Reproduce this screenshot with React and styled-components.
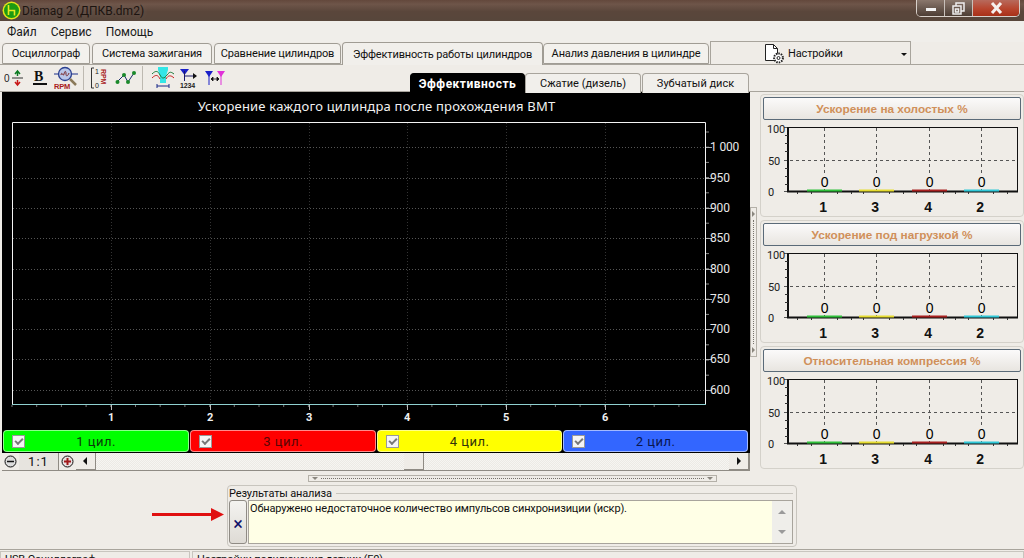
import React from 'react'
import styled, { createGlobalStyle } from 'styled-components'

const GlobalStyle = createGlobalStyle`
  html, body {
    margin: 0;
    padding: 0;
    background: #efece7;
    overflow: hidden;
  }
  * { box-sizing: border-box; }
`

const topTabs = [
  { label: 'Осциллограф', width: 88, gap: 2 },
  { label: 'Система зажигания', width: 120, gap: 2 },
  { label: 'Сравнение цилиндров', width: 127, gap: 1 },
  { label: 'Эффективность работы цилиндров', width: 201, active: true },
  { label: 'Анализ давления в цилиндре', width: 166 }
]

const yLabels = [
  { y: 147, text: '1 000' },
  { y: 178, text: '950' },
  { y: 208, text: '900' },
  { y: 238, text: '850' },
  { y: 269, text: '800' },
  { y: 299, text: '750' },
  { y: 329, text: '700' },
  { y: 359, text: '650' },
  { y: 390, text: '600' }
]

const xLabels = ['1', '2', '3', '4', '5', '6']
const xPos = [111, 210, 309, 407, 506, 605]

const cylinders = [
  { label: '1 цил.', color: '#00ff00', text: '#0a3a0a', width: 186 },
  { label: '3 цил.', color: '#ff0000', text: '#5a0505', width: 186 },
  { label: '4 цил.', color: '#ffff00', text: '#33330a', width: 185 },
  { label: '2 цил.', color: '#3366ff', text: '#0a1650', width: 185 }
]

const miniCharts = ['Ускорение на холостых %', 'Ускорение под нагрузкой %', 'Относительная компрессия %']

export default function App () {
  return (
    <Window>
      <GlobalStyle />
      <TitleBar>
        <svg width="21" height="21" viewBox="0 0 21 21">
          <circle cx="10.5" cy="10.5" r="9" fill="#e2e21a" />
          <circle cx="10.5" cy="10.5" r="7.5" fill="#1d9a12" />
          <path d="M7.5 5v10M7.5 10.5h6v5" fill="none" stroke="#e8e820" strokeWidth="1.6" />
        </svg>
        <TitleText>Diamag 2 (ДПКВ.dm2)</TitleText>
        <WindowButtons>
          <WinButton>
            <svg width="12" height="8" viewBox="0 0 12 8"><rect x="1" y="4" width="10" height="3" fill="#f4f4f4" /></svg>
          </WinButton>
          <WinButton>
            <svg width="13" height="13" viewBox="0 0 13 13" fill="none" stroke="#eee" strokeWidth="1.5"><rect x="4" y="1" width="8" height="8" /><rect x="1" y="4" width="8" height="8" fill="#6b5a50" /><rect x="3.5" y="7" width="3" height="3" /></svg>
          </WinButton>
          <CloseButton>
            <svg width="13" height="12" viewBox="0 0 13 12"><path d="M2 1l9 10M11 1l-9 10" stroke="#f6f0ee" strokeWidth="3" /></svg>
          </CloseButton>
        </WindowButtons>
      </TitleBar>

      <MenuBar>
        <MenuItem>Файл</MenuItem>
        <MenuItem>Сервис</MenuItem>
        <MenuItem>Помощь</MenuItem>
      </MenuBar>

      <TabStrip>
        {topTabs.map(t => (
          <TopTab key={t.label} $active={t.active} $width={t.width} $gap={t.gap}>{t.label}</TopTab>
        ))}
        <SettingsTab>
          <svg width="22" height="21" viewBox="0 0 22 21" fill="none">
            <path d="M1.5 1.5h8l4 4v12h-12z" fill="#fff" stroke="#222" />
            <path d="M9.5 1.5v4h4" stroke="#222" />
            <circle cx="14.5" cy="15" r="4.4" fill="#fff" stroke="#222" strokeWidth="2" strokeDasharray="1.5 1" />
            <circle cx="14.5" cy="15" r="1.5" stroke="#222" />
          </svg>
          <span>Настройки</span>
          <Caret />
        </SettingsTab>
      </TabStrip>

      <ToolRow>
        <ToolGroup>
          <ToolIcon>
            <svg width="22" height="18" viewBox="0 0 22 18">
              <text x="0" y="13" fontFamily="Liberation Sans" fontSize="10" fill="#222">0</text>
              <path d="M8 9h11" stroke="#333" />
              <path d="M13.5 7V3M11 5l2.5-3 2.5 3" fill="none" stroke="#0a7a20" strokeWidth="1.5" />
              <path d="M13.5 11v4M11 13l2.5 3 2.5-3" fill="none" stroke="#c81818" strokeWidth="1.5" />
            </svg>
          </ToolIcon>
          <ToolIcon>
            <svg width="22" height="18" viewBox="0 0 22 18">
              <text x="4" y="12" fontFamily="Liberation Serif" fontSize="14" fontWeight="700" fill="#111">B</text>
              <rect x="3" y="14" width="14" height="2" fill="#111" />
            </svg>
          </ToolIcon>
          <ToolIcon>
            <svg width="26" height="24" viewBox="0 0 26 24">
              <path d="M0 8h24" stroke="#1a2f8a" />
              <circle cx="11" cy="8" r="6.5" fill="#b9c6e8" stroke="#2a3f90" strokeWidth="1.3" />
              <path d="M7 9c1-5 2 3 3-1s2-3 2 0 2 2 3-1" fill="none" stroke="#7a2a2a" />
              <path d="M16 13l6 6" stroke="#8a7a5a" strokeWidth="2.5" />
              <text x="0" y="23" fontFamily="Liberation Sans" fontSize="7.5" fontWeight="700" fill="#a82020">RPM</text>
            </svg>
          </ToolIcon>
        </ToolGroup>
        <ToolSep />
        <ToolGroup>
          <ToolIcon>
            <svg width="20" height="24" viewBox="0 0 20 24">
              <path d="M4 2H1.5v20H4" fill="none" stroke="#333" />
              <text x="5" y="8" fontFamily="Liberation Sans" fontSize="7" fill="#222">1</text>
              <text x="5" y="22" fontFamily="Liberation Sans" fontSize="7" fill="#222">0</text>
              <text transform="translate(11 3) rotate(90)" fontFamily="Liberation Sans" fontSize="7" fontWeight="700" fill="#a82020">RPM</text>
            </svg>
          </ToolIcon>
          <ToolIcon>
            <svg width="22" height="18" viewBox="0 0 22 18">
              <path d="M2 13l7-7 4 7 6-9" fill="none" stroke="#1a2a6a" />
              <g fill="#1a8a2a"><circle cx="2.5" cy="13" r="2" /><circle cx="9" cy="6" r="2" /><circle cx="13" cy="13" r="2" /><circle cx="19" cy="4" r="2" /></g>
            </svg>
          </ToolIcon>
        </ToolGroup>
        <ToolSep />
        <IconGroupWide>
          <ToolIcon>
            <svg width="24" height="22" viewBox="0 0 24 22">
              <path d="M7 0h10v3l-2 6v7h-6V9L7 3z" fill="#33e6e6" />
              <path d="M1 7c4-4 6-3 8 1s4 4 7 0 4-3 7-1" fill="none" stroke="#1a7a3a" />
              <path d="M1 11c4-4 6-3 8 1M15 12c2-4 5-4 8-1" fill="none" stroke="#c82020" />
              <path d="M6 19h12M6 17v4M18 17v4" stroke="#1a2a8a" />
            </svg>
          </ToolIcon>
          <ToolIcon>
            <svg width="22" height="22" viewBox="0 0 22 22">
              <path d="M2 2h9L6.5 8z" fill="#1a20c8" />
              <path d="M6.5 4v10M7 9h11" stroke="#1a1a6a" />
              <path d="M15 6l4 3-4 3z" fill="#111" />
              <text x="2" y="21" fontFamily="Liberation Sans" fontSize="7" fontWeight="700" fill="#222">1234</text>
            </svg>
          </ToolIcon>
          <ToolIcon>
            <svg width="22" height="18" viewBox="0 0 22 18">
              <path d="M1 2h8L5 8z" fill="#1a20c8" />
              <path d="M5 4v12" stroke="#1a20c8" />
              <path d="M13 2h8l-4 6z" fill="#e030d8" />
              <path d="M17 4v12" stroke="#e030d8" />
              <path d="M7 10h8M7 10l2-2v4zM15 10l-2-2v4z" stroke="#111" fill="#111" strokeWidth=".8" />
            </svg>
          </ToolIcon>
        </IconGroupWide>
        <SubTabs>
          <SubTab $active $width={115}>Эффективность</SubTab>
          <SubTab $width={116}>Сжатие (дизель)</SubTab>
          <SubTab $width={107}>Зубчатый диск</SubTab>
        </SubTabs>
      </ToolRow>

      <Workspace>
        <LeftColumn>
          <ChartPanel>
            <ChartTitle>Ускорение каждого цилиндра после прохождения ВМТ</ChartTitle>
            <MainChart />
            <LegendRow>
              {cylinders.map(c => (
                <LegendButton key={c.label} $bg={c.color} $fg={c.text} $width={c.width}>
                  <CheckBox><CheckMark /></CheckBox>
                  <span>{c.label}</span>
                </LegendButton>
              ))}
            </LegendRow>
          </ChartPanel>
          <ScrollRow>
            <RoundButton>
              <svg width="13" height="13" viewBox="0 0 13 13"><circle cx="6.5" cy="6.5" r="5.5" fill="#dcdcdc" stroke="#111" /><path d="M3 6.5h7" stroke="#111" strokeWidth="1.5" /></svg>
            </RoundButton>
            <ZoomValue>1:1</ZoomValue>
            <RoundButton>
              <svg width="13" height="13" viewBox="0 0 13 13"><circle cx="6.5" cy="6.5" r="5.5" fill="#e8e0e0" stroke="#111" /><path d="M3 6.5h7M6.5 3v7" stroke="#a01818" strokeWidth="2" /></svg>
            </RoundButton>
            <ScrollTrack>
              <ScrollArrow><ArrowLeft /></ScrollArrow>
              <ScrollSpace $grow={311} />
              <ScrollThumb />
              <ScrollSpace $grow={307} />
              <ScrollArrow><ArrowRight /></ScrollArrow>
            </ScrollTrack>
          </ScrollRow>
        </LeftColumn>

        <VerticalSplit>
          <SplitArrow />
          <SplitDots />
          <SplitArrow />
        </VerticalSplit>

        <RightColumn>
          {miniCharts.map(title => (
            <MiniPanel key={title}>
              <MiniHeader>{title}</MiniHeader>
              <MiniChart />
            </MiniPanel>
          ))}
        </RightColumn>
      </Workspace>

      <HorizontalSplit>
        <SplitArrowDown />
        <HorizontalDots />
        <SplitArrowDown />
      </HorizontalSplit>

      <BottomRow>
        <svg width="72" height="13" viewBox="0 0 72 13">
          <path d="M0 5h60v3H0z" fill="#e01010" />
          <path d="M59 0l13 6.5L59 13z" fill="#e01010" />
        </svg>
        <ResultGroup>
          <ResultLegend>
            <span>Результаты анализа</span>
            <LegendLine />
          </ResultLegend>
          <ResultBody>
            <CloseResult>×</CloseResult>
            <ResultText>
              <ResultMessage>Обнаружено недостаточное количество импульсов синхронизиции (искр).</ResultMessage>
              <ResultScroll>
                <ResultScrollButton><ScrollUp /></ResultScrollButton>
                <ResultScrollButton><ScrollDown /></ResultScrollButton>
              </ResultScroll>
            </ResultText>
          </ResultBody>
        </ResultGroup>
      </BottomRow>

      <StatusBar>
        <StatusCell $width={190}>USB Осциллограф</StatusCell>
        <StatusCell $width={832}>Настройки подключения датчик (F0)</StatusCell>
      </StatusBar>
    </Window>
  )
}

function MainChart () {
  const ticks = []
  for (let x = 12; x <= 700; x += 24.7) ticks.push(x)
  const minor = []
  for (let y = 132; y < 404; y += 15.2) minor.push(y)
  return (
    <PlotSvg viewBox="0 0 748 314">
      <g transform="translate(-2 -116)">
        {yLabels.map(l => (
          <path key={l.y} d={`M13 ${l.y}.5H704`} stroke="#555" strokeDasharray="1 2" />
        ))}
        {xPos.map(x => (
          <path key={x} d={`M${x}.5 123V403`} stroke="#333" strokeDasharray="1 2" />
        ))}
        <path d="M12.5 404V122.5H705.5V404" fill="none" stroke="#f4f4f4" />
        <path d="M12 404.500H706" stroke="#8fd0d0" />
        {minor.map(y => <path key={y} d={`M706 ${y}h3`} stroke="#888" />)}
        {yLabels.map(l => <path key={l.y} d={`M706 ${l.y}.5h6`} stroke="#aaa" />)}
        {ticks.map(x => <path key={x} d={`M${x} 405v2`} stroke="#777" />)}
        {xPos.map(x => <path key={x} d={`M${x}.5 405v5`} stroke="#bbb" />)}
        {yLabels.map(l => (
          <text key={l.y} x={710} y={l.y + 4} fill="#e8e8e8" fontSize="12" fontFamily="Roboto, sans-serif">{l.text}</text>
        ))}
        {xLabels.map((t, i) => (
          <text key={t} x={xPos[i]} y={421} fill="#f0f0f0" fontSize="11" fontWeight="700" textAnchor="middle" fontFamily="Roboto, sans-serif">{t}</text>
        ))}
      </g>
    </PlotSvg>
  )
}

function MiniChart () {
  const cols = [
    { x: 61, name: '1', color: '#2fbf3a' },
    { x: 113, name: '3', color: '#e6dc30' },
    { x: 166, name: '4', color: '#a82020' },
    { x: 218, name: '2', color: '#30c8d8' }
  ]
  return (
    <svg width="258" height="90" viewBox="0 0 258 90">
      <path d="M21 3.5h4M21 36.5h234M21 67.5h4" stroke="#555" strokeDasharray="3 3" />
      {cols.map(c => (
        <path key={c.x} d={`M${c.x}.5 4V67`} stroke="#555" strokeDasharray="3 3" />
      ))}
      <rect x="25.5" y="3.5" width="229" height="64" fill="none" stroke="#111" />
      <path d="M24 67.5H255" stroke="#111" strokeWidth="2" />
      <path d="M25 3V68" stroke="#111" strokeWidth="2" />
      {[11, 19, 27, 44, 52, 60].map(y => <path key={y} d={`M22 ${y}.5h3`} stroke="#333" />)}
      {[34, 48, 74, 88, 100, 126, 140, 153, 180, 192, 205, 230, 244].map(x => <path key={x} d={`M${x}.5 68v2`} stroke="#333" />)}
      {cols.map(c => (
        <g key={c.name}>
          <rect x={c.x - 17} y="65.5" width="35" height="2" fill={c.color} />
          <rect x={c.x - 6} y="50" width="13" height="15" fill="#efece7" />
          <text x={c.x + 0.5} y="63" fontSize="14" textAnchor="middle" fontFamily="Liberation Sans, sans-serif" fill="#000">0</text>
          <text x={c.x - 1} y="88" fontSize="14" fontWeight="700" textAnchor="middle" fontFamily="Liberation Sans, sans-serif" fill="#111">{c.name}</text>
        </g>
      ))}
      <text x="4" y="9" fontSize="11" fontFamily="Roboto, sans-serif" fill="#222">100</text>
      <text x="5" y="41" fontSize="11" fontFamily="Roboto, sans-serif" fill="#222">50</text>
      <text x="5" y="72" fontSize="11" fontFamily="Roboto, sans-serif" fill="#222">0</text>
    </svg>
  )
}

const uiFont = 'Roboto, "Noto Sans", sans-serif'

const Window = styled.div`
  width: 1024px;
  height: 558px;
  overflow: hidden;
  display: flex;
  flex-direction: column;
  background: #efece7;
  font-family: ${uiFont};
  font-size: 11px;
  letter-spacing: -.15px;
  color: #111;
`

const TitleBar = styled.div`
  height: 21px;
  flex: none;
  display: flex;
  align-items: center;
  padding-left: 1px;
  background: linear-gradient(#63483c 0, #6e5549 20%, #5a463b 55%, #57463b 100%);
`

const TitleText = styled.div`
  font-size: 12px;
  letter-spacing: 0;
  color: #1c1410;
  text-shadow: 0 0 6px rgba(255,255,255,.18);
`

const WindowButtons = styled.div`
  margin-left: auto;
  margin-right: 4px;
  height: 17px;
  margin-top: -4px;
  display: flex;
  border: 1px solid #d8d0ca;
  border-top: 0;
  border-radius: 0 0 5px 5px;
  overflow: hidden;
`

const WinButton = styled.div`
  width: 28px;
  display: flex;
  align-items: center;
  justify-content: center;
  border-right: 1px solid #c8c0ba;
  background: linear-gradient(#8a776c, #6b5a50 50%, #4d3d34);
`

const CloseButton = styled(WinButton)`
  width: 46px;
  border-right: 0;
  background: linear-gradient(#b76a5c, #b8452e 55%, #a83018);
`

const MenuBar = styled.div`
  height: 21px;
  flex: none;
  display: flex;
  align-items: center;
  gap: 14px;
  padding-left: 7px;
  font-size: 12px;
  letter-spacing: 0;
  background: #f0eeea;
`

const MenuItem = styled.div`
  color: #1a1a1a;
`

const TabStrip = styled.div`
  height: 23px;
  flex: none;
  display: flex;
  align-items: flex-end;
  padding-left: 2px;
  border-bottom: 1px solid #a8a49c;
`

const TopTab = styled.div`
  width: ${p => p.$width}px;
  height: ${p => (p.$active ? 23 : 21)}px;
  margin-right: ${p => p.$gap || 0}px;
  margin-bottom: ${p => (p.$active ? -1 : 0)}px;
  flex: none;
  display: flex;
  align-items: center;
  justify-content: center;
  white-space: nowrap;
  background: ${p => (p.$active ? '#f1efeb' : '#f3f1ed')};
  border: 1px solid #a09c94;
  border-bottom: ${p => (p.$active ? 0 : '1px solid #a09c94')};
  border-radius: 4px 4px 0 0;
  position: relative;
  z-index: ${p => (p.$active ? 1 : 0)};
`

const SettingsTab = styled.div`
  width: 201px;
  height: 23px;
  margin-left: 1px;
  display: flex;
  align-items: center;
  padding-left: 53px;
  gap: 2px;
  background: #efece7;
  border: 1px solid #a8a49c;
  border-bottom: 0;
  position: relative;
`

const Caret = styled.i`
  position: absolute;
  right: 3px;
  top: 11px;
  width: 0;
  height: 0;
  border: 3px solid transparent;
  border-top: 3px solid #111;
`

const ToolRow = styled.div`
  height: 27px;
  flex: none;
  display: flex;
  align-items: center;
  padding-left: 2px;
  border-bottom: 1px solid #a8a49c;
`

const ToolGroup = styled.div`
  display: flex;
  align-items: center;
  height: 25px;
`

const IconGroupWide = styled(ToolGroup)`
  margin-left: 4px;
`

const ToolIcon = styled.div`
  width: 26px;
  display: flex;
  align-items: center;
  justify-content: center;
`

const ToolSep = styled.div`
  width: 1px;
  height: 24px;
  margin: 0 3px;
  background: #bdb9b1;
`

const SubTabs = styled.div`
  position: relative;
  top: 2px;
  height: 20px;
  margin-left: 182px;
  align-self: flex-end;
  display: flex;
`

const SubTab = styled.div`
  width: ${p => p.$width}px;
  margin-right: ${p => (p.$active ? 0 : 1)}px;
  display: flex;
  align-items: center;
  justify-content: center;
  font-size: ${p => (p.$active ? 12 : 11)}px;
  font-weight: ${p => (p.$active ? 700 : 400)};
  letter-spacing: ${p => (p.$active ? '.5px' : 0)};
  color: ${p => (p.$active ? '#fff' : '#111')};
  background: ${p => (p.$active ? '#000' : '#f1efeb')};
  border: 1px solid ${p => (p.$active ? '#000' : '#a8a49c')};
  border-bottom: 0;
  border-radius: 4px 4px 0 0;
`

const Workspace = styled.div`
  height: 378px;
  flex: none;
  display: flex;
  padding-left: 2px;
`

const LeftColumn = styled.div`
  width: 749px;
  display: flex;
  flex-direction: column;
`

const ChartPanel = styled.div`
  height: 361px;
  flex: none;
  display: flex;
  flex-direction: column;
  background: #000;
`

const ChartTitle = styled.div`
  height: 24px;
  display: flex;
  align-items: center;
  justify-content: center;
  padding-left: 1px;
  padding-top: 3px;
  font-family: "Noto Sans", sans-serif;
  font-size: 13px;
  color: #f2f2f2;
  letter-spacing: .2px;
`

const PlotSvg = styled.svg`
  display: block;
  flex: none;
  width: 748px;
  height: 314px;
`

const LegendRow = styled.div`
  display: flex;
  gap: 1px;
  padding-left: 1px;
`

const LegendButton = styled.div`
  width: ${p => p.$width}px;
  height: 22px;
  display: flex;
  align-items: center;
  justify-content: center;
  position: relative;
  font-size: 13px;
  letter-spacing: .5px;
  color: ${p => p.$fg};
  background: ${p => p.$bg};
  border: 1px solid rgba(255,255,255,.55);
  border-radius: 4px;
`

const CheckBox = styled.div`
  position: absolute;
  left: 8px;
  top: 4px;
  width: 13px;
  height: 13px;
  background: #f5f5f5;
  border: 1px solid #999;
  display: flex;
  align-items: center;
  justify-content: center;
`

const CheckMark = styled.i`
  display: block;
  width: 8px;
  height: 5px;
  margin-top: -2px;
  border-left: 2px solid #777;
  border-bottom: 2px solid #777;
  transform: rotate(-45deg);
`

const ScrollRow = styled.div`
  height: 18px;
  flex: none;
  display: flex;
  align-items: stretch;
  border-bottom: 1px solid #8f8b84;
  border-right: 1px solid #8f8b84;
  background: repeating-conic-gradient(#f6f5f2 0 25%, #eceae5 0 50%) 0 0 / 2px 2px;
`

const RoundButton = styled.div`
  width: 17px;
  flex: none;
  display: flex;
  align-items: center;
  justify-content: center;
  background: #efece7;
`

const ZoomValue = styled.div`
  width: 40px;
  flex: none;
  display: flex;
  align-items: center;
  justify-content: center;
  font-size: 13px;
  letter-spacing: 1px;
  background: #e7e4df;
  border-right: 1px solid #8f8b84;
`

const ScrollTrack = styled.div`
  flex: 1;
  display: flex;
`

const ScrollArrow = styled.div`
  width: 20px;
  display: flex;
  align-items: center;
  justify-content: center;
  background: #efece7;
  border-right: 1px solid #8f8b84;
  border-bottom: 1px solid #8f8b84;
`

const ArrowLeft = styled.i`
  width: 0;
  height: 0;
  border: 4px solid transparent;
  border-right: 4px solid #111;
  margin-left: -5px;
`

const ArrowRight = styled.i`
  width: 0;
  height: 0;
  border: 4px solid transparent;
  border-left: 4px solid #111;
  margin-right: -5px;
`

const ScrollSpace = styled.div`
  flex: ${p => p.$grow} 1 0;
`

const ScrollThumb = styled.div`
  width: 20px;
  background: #efece7;
  border-right: 1px solid #8f8b84;
  border-bottom: 1px solid #8f8b84;
`

const VerticalSplit = styled.div`
  width: 7px;
  height: 150px;
  margin-top: 115px;
  flex: none;
  display: flex;
  flex-direction: column;
  align-items: center;
  justify-content: space-between;
  padding: 3px 0;
  background: #efece7;
  border: 1px solid #b4b0a8;
`

const SplitArrow = styled.i`
  width: 0;
  height: 0;
  margin-left: 3px;
  border: 3px solid transparent;
  border-left: 3px solid #8a867e;
`

const SplitDots = styled.div`
  flex: 1;
  width: 1px;
  margin: 3px 0;
  border-left: 1px dotted #77736c;
`

const RightColumn = styled.div`
  flex: 1;
  display: flex;
  flex-direction: column;
  gap: 3px;
  padding: 2px 2px 0 3px;
`

const MiniPanel = styled.div`
  height: 123px;
  display: flex;
  flex-direction: column;
  padding: 2px;
  border: 1px solid #d4d1ca;
  border-radius: 4px;
`

const MiniHeader = styled.div`
  height: 23px;
  flex: none;
  display: flex;
  align-items: center;
  justify-content: center;
  font-family: "Liberation Sans", sans-serif;
  font-size: 11.8px;
  letter-spacing: 0;
  font-weight: 700;
  color: #d0905a;
  background: linear-gradient(#fbfafa, #e8e5e0);
  border: 1px solid #5a6a78;
  border-radius: 2px;
  margin-bottom: 4px;
`

const HorizontalSplit = styled.div`
  width: 409px;
  height: 7px;
  flex: none;
  margin: 5px 0 0 308px;
  display: flex;
  align-items: center;
  padding: 0 3px;
  gap: 3px;
  border: 1px solid #b4b0a8;
`

const SplitArrowDown = styled.i`
  width: 0;
  height: 0;
  margin-top: 3px;
  border: 3px solid transparent;
  border-top: 3px solid #8a867e;
`

const HorizontalDots = styled.div`
  flex: 1;
  height: 1px;
  border-top: 1px dotted #77736c;
`

const BottomRow = styled.div`
  height: 65px;
  flex: none;
  display: flex;
  align-items: center;
  gap: 3px;
  padding-left: 152px;
`

const ResultGroup = styled.div`
  width: 570px;
  height: 62px;
  margin-top: 3px;
  padding: 0 3px 2px 1px;
  display: flex;
  flex-direction: column;
  border: 1px solid #c8c5be;
  border-radius: 4px;
`

const ResultLegend = styled.div`
  height: 14px;
  flex: none;
  display: flex;
  align-items: center;
  gap: 4px;
`

const LegendLine = styled.div`
  flex: 1;
  height: 1px;
  margin-top: 1px;
  background: #c8c5be;
`

const ResultBody = styled.div`
  flex: 1;
  display: flex;
  gap: 1px;
`

const CloseResult = styled.div`
  width: 18px;
  display: flex;
  align-items: center;
  justify-content: center;
  padding-top: 2px;
  font-size: 18px;
  color: #10106a;
  background: linear-gradient(#f4f3f0, #dedbd5);
  border: 1px solid #8f8b84;
  border-radius: 3px;
`

const ResultText = styled.div`
  flex: 1;
  display: flex;
  border: 1px solid #a8a49c;
  background: #ffffe6;
`

const ResultMessage = styled.div`
  flex: 1;
  padding: 0 1px;
  line-height: 15px;
`

const ResultScroll = styled.div`
  width: 20px;
  display: flex;
  flex-direction: column;
  background: #efeeea;
`

const ResultScrollButton = styled.div`
  flex: 1;
  display: flex;
  align-items: center;
  justify-content: center;
`

const ScrollUp = styled.i`
  width: 0;
  height: 0;
  margin-top: -3px;
  border: 4px solid transparent;
  border-bottom: 4px solid #9a9a9a;
`

const ScrollDown = styled.i`
  width: 0;
  height: 0;
  margin-top: 3px;
  border: 4px solid transparent;
  border-top: 4px solid #9a9a9a;
`

const StatusBar = styled.div`
  flex: none;
  height: 20px;
  margin-top: 2px;
  display: flex;
  gap: 2px;
  border-top: 1px solid #a8a49c;
`

const StatusCell = styled.div`
  width: ${p => p.$width}px;
  height: 20px;
  margin-top: 1px;
  padding: 1px 4px;
  border: 1px solid #c8c5be;
`
